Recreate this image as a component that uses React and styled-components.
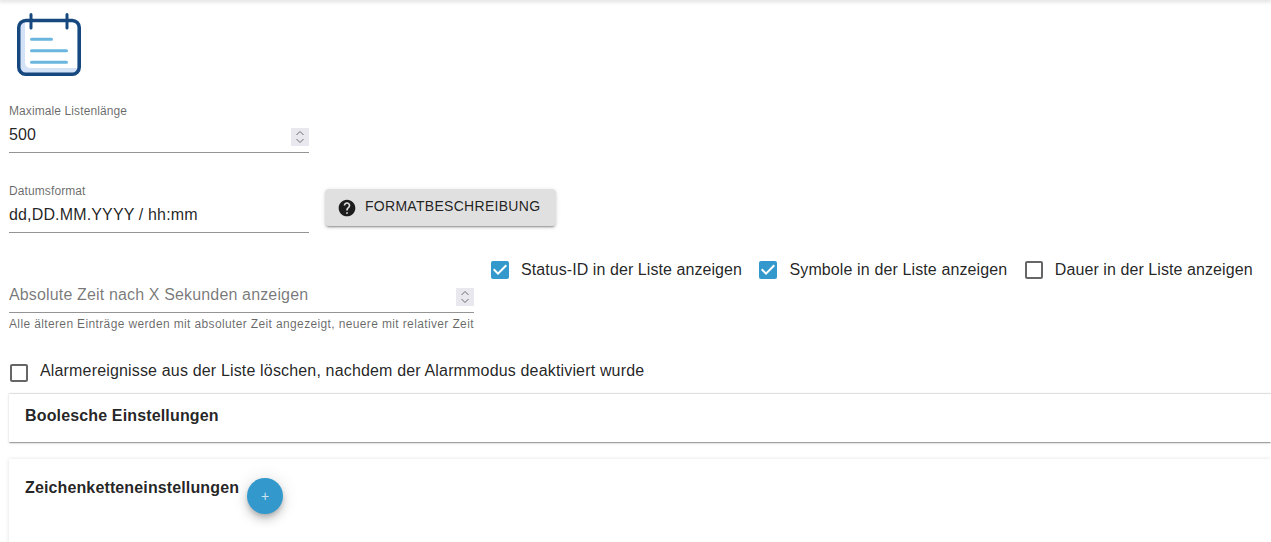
import styled, { createGlobalStyle } from "styled-components";

const GlobalStyle = createGlobalStyle`
  html, body {
    margin: 0;
    padding: 0;
    background: #fff;
    font-family: "Liberation Sans", Arial, sans-serif;
    color: rgba(0, 0, 0, 0.87);
    overflow: hidden;
  }
`;

function CalendarLogo() {
  return (
    <svg width="64" height="64" viewBox="0 0 64 64" fill="none">
      <rect x="2" y="7.500" width="60" height="54" rx="7" fill="#d3e2f6" />
      <path d="M8 9H60V55H14Q8 55 8 49z" fill="#fff" />
      <rect x="1.750" y="7.500" width="60.500" height="53.750" rx="7" stroke="#16487f" strokeWidth="3.500" />
      <path d="M14 1.500v13.500M50 1.500v13.500" stroke="#16487f" strokeWidth="3" strokeLinecap="round" />
      <path d="M14.500 26.300h20M14.500 37.700h35M14.500 49.300h35" stroke="#6bb6df" strokeWidth="3" strokeLinecap="round" />
    </svg>
  );
}

function Spinner() {
  return (
    <SpinBox>
      <svg width="10" height="14" viewBox="0 0 10 14" fill="none" stroke="#6d6d6d" strokeWidth="1">
        <path d="M1.500 5 5 1.500 8.500 5M1.500 9 5 12.500 8.500 9" />
      </svg>
    </SpinBox>
  );
}

function HelpIcon() {
  return (
    <svg width="20" height="20" viewBox="0 0 24 24" fill="currentColor">
      <path d="M12 2C6.480 2 2 6.480 2 12s4.480 10 10 10 10-4.480 10-10S17.520 2 12 2zm1 17h-2v-2h2v2zm2.070-7.750-.9.920C13.450 12.900 13 13.500 13 15h-2v-.5c0-1.100.45-2.100 1.170-2.830l1.240-1.260c.37-.36.590-.86.590-1.410 0-1.100-.9-2-2-2s-2 .9-2 2H8c0-2.210 1.790-4 4-4s4 1.790 4 4c0 .88-.36 1.680-.93 2.250z" />
    </svg>
  );
}

function Check({ checked, label, spacing, low }) {
  return (
    <CheckLabel $spacing={spacing}>
      <CheckBoxIcon $low={low}>
        {checked ? (
          <svg width="24" height="24" viewBox="0 0 24 24" fill="#3399cc">
            <path d="M19 3H5c-1.110 0-2 .9-2 2v14c0 1.100.89 2 2 2h14c1.110 0 2-.9 2-2V5c0-1.100-.89-2-2-2zm-9 14l-5-5 1.410-1.410L10 14.170l7.590-7.590L19 8l-9 9z" />
          </svg>
        ) : (
          <svg width="24" height="24" viewBox="0 0 24 24" fill="rgba(0,0,0,0.6)">
            <path d="M19 5v14H5V5h14m0-2H5c-1.100 0-2 .9-2 2v14c0 1.100.9 2 2 2h14c1.100 0 2-.9 2-2V5c0-1.100-.9-2-2-2z" />
          </svg>
        )}
      </CheckBoxIcon>
      <span>{label}</span>
    </CheckLabel>
  );
}

export default function App() {
  return (
    <>
      <GlobalStyle />
      <TopShadow />
      <Page>
        <Logo>
          <CalendarLogo />
        </Logo>

        <Field $width="300px" $mt="27px">
          <FieldLabel>Maximale Listenlänge</FieldLabel>
          <InputLine>
            <InputText>500</InputText>
            <Spinner />
          </InputLine>
        </Field>

        <DateRow>
          <Field $width="300px">
            <FieldLabel>Datumsformat</FieldLabel>
            <InputLine>
              <InputText>dd,DD.MM.YYYY / hh:mm</InputText>
            </InputLine>
          </Field>
          <HelpButton>
            <HelpIcon />
            <span>Formatbeschreibung</span>
          </HelpButton>
        </DateRow>

        <OptionsRow>
          <Field $width="465px" $mt="26px">
            <InputLine>
              <Placeholder>Absolute Zeit nach X Sekunden anzeigen</Placeholder>
              <Spinner />
            </InputLine>
            <HelperText>Alle älteren Einträge werden mit absoluter Zeit angezeigt, neuere mit relativer Zeit</HelperText>
          </Field>
          <Checks>
            <Check checked spacing="0.07px" label="Status-ID in der Liste anzeigen" />
            <Check checked spacing="0.12px" label="Symbole in der Liste anzeigen" />
            <Check spacing="0.08px" label="Dauer in der Liste anzeigen" />
          </Checks>
        </OptionsRow>

        <ClearRow>
          <Check low spacing="0.163px" label="Alarmereignisse aus der Liste löschen, nachdem der Alarmmodus deaktiviert wurde" />
        </ClearRow>

        <Accordion>
          <PanelTitle>Boolesche Einstellungen</PanelTitle>
        </Accordion>

        <StringsPanel>
          <PanelTitle>Zeichenketteneinstellungen</PanelTitle>
          <Fab>+</Fab>
        </StringsPanel>
      </Page>
    </>
  );
}

const TopShadow = styled.div`
  height: 0;
  box-shadow: 0 0 4px 1px rgba(0, 0, 0, 0.25);
`;

const Page = styled.div`
  padding-left: 9px;
  height: 542px;
  overflow: hidden;
`;

const Logo = styled.div`
  display: flex;
  padding: 13px 0 0 8px;
  height: 64px;
`;

const Field = styled.div`
  display: flex;
  flex-direction: column;
  flex: none;
  width: ${(p) => p.$width};
  margin-top: ${(p) => p.$mt || 0};
`;

const FieldLabel = styled.label`
  font-size: 12px;
  line-height: 14px;
  letter-spacing: 0.1px;
  color: rgba(0, 0, 0, 0.6);
`;

const InputLine = styled.div`
  display: flex;
  align-items: center;
  justify-content: space-between;
  height: 32px;
  margin-top: 2px;
  border-bottom: 1px solid rgba(0, 0, 0, 0.42);
  font-size: 16px;
`;

const InputText = styled.span`
  padding-bottom: 2px;
  letter-spacing: 0.15px;
`;

const Placeholder = styled.span`
  padding-bottom: 2px;
  letter-spacing: 0.15px;
  color: rgba(0, 0, 0, 0.54);
`;

const SpinBox = styled.span`
  display: flex;
  align-items: center;
  justify-content: center;
  width: 18px;
  height: 18px;
  margin-top: 2px;
  background: #e8e8ee;
`;

const HelperText = styled.p`
  margin: 3px 0 0;
  font-size: 12px;
  line-height: 16px;
  letter-spacing: 0.365px;
  white-space: nowrap;
  color: rgba(0, 0, 0, 0.6);
`;

const DateRow = styled.div`
  display: flex;
  align-items: flex-start;
  gap: 16px;
  margin-top: 31px;
`;

const HelpButton = styled.button`
  display: flex;
  align-items: center;
  gap: 8px;
  height: 37px;
  margin-top: 5px;
  padding: 0 16px 0 12px;
  border: 0;
  border-radius: 4px;
  background: #e0e0e0;
  color: rgba(0, 0, 0, 0.87);
  font: 400 14px "Liberation Sans", Arial, sans-serif;
  letter-spacing: 0.29px;
  text-transform: uppercase;
  box-shadow: 0 3px 1px -2px rgba(0, 0, 0, 0.2), 0 2px 2px 0 rgba(0, 0, 0, 0.14), 0 1px 5px 0 rgba(0, 0, 0, 0.12);

  svg {
    margin-top: 1px;
  }

  span {
    padding-bottom: 3px;
  }
`;

const OptionsRow = styled.div`
  display: flex;
  align-items: flex-start;
  margin-top: 19px;
`;

const Checks = styled.div`
  display: flex;
  gap: 14.500px;
  margin: 1px 0 0 14px;
`;

const CheckLabel = styled.label`
  display: flex;
  align-items: center;
  gap: 9px;
  height: 34px;
  font-size: 16px;
  letter-spacing: ${(p) => p.$spacing};
  white-space: nowrap;
`;

const CheckBoxIcon = styled.span`
  display: flex;
  width: 24px;
  height: 24px;
  margin-top: ${(p) => (p.$low ? "4px" : "0")};
`;

const ClearRow = styled.div`
  display: flex;
  margin-top: 22px;
  margin-left: -2px;
`;

const Accordion = styled.section`
  box-sizing: border-box;
  height: 49px;
  margin-top: 5px;
  padding: 0 16px;
  display: flex;
  align-items: flex-start;
  background: #fff;
  border-top: 1px solid rgba(0, 0, 0, 0.12);
  box-shadow: 0 2px 1px -1px rgba(0, 0, 0, 0.2), 0 1px 1px 0 rgba(0, 0, 0, 0.14), 0 1px 3px 0 rgba(0, 0, 0, 0.12);
`;

const PanelTitle = styled.h3`
  margin: 12px 0 0;
  font-size: 16px;
  line-height: 20px;
  font-weight: 700;
  letter-spacing: 0.15px;
`;

const StringsPanel = styled(Accordion)`
  height: 120px;
  margin-top: 17px;
  gap: 8px;
  border-top: 0;
  box-shadow: 0 0 4px rgba(0, 0, 0, 0.12);

  h3 {
    margin-top: 19px;
    letter-spacing: 0.13px;
  }
`;

const Fab = styled.button`
  width: 36px;
  height: 36px;
  margin-top: 19px;
  padding: 0;
  border: 0;
  border-radius: 50%;
  background: #3399cc;
  color: rgba(255, 255, 255, 0.75);
  font: 400 14px "Liberation Sans", Arial, sans-serif;
  box-shadow: 0 3px 5px -1px rgba(0, 0, 0, 0.2), 0 6px 10px 0 rgba(0, 0, 0, 0.14), 0 1px 18px 0 rgba(0, 0, 0, 0.12);
`;
